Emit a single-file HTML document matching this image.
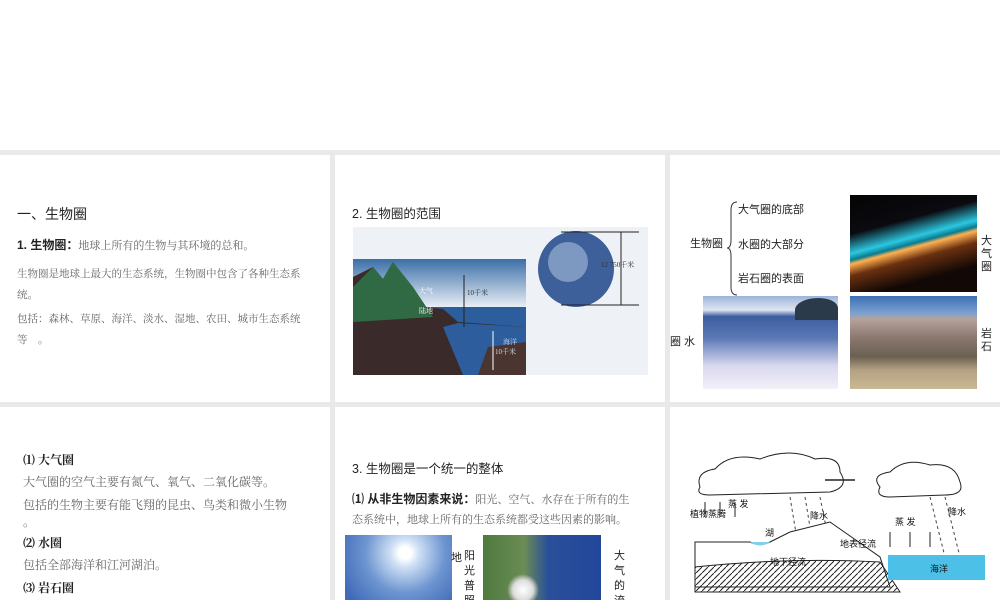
<!DOCTYPE html>
<html style="overflow:hidden;width:1000px;height:600px"><head><meta charset="utf-8"><style>
*{margin:0;padding:0;box-sizing:border-box}
body{width:1000px;height:600px;background:#e9e9e9;position:relative;overflow:hidden;font-family:"Liberation Serif","Noto Serif CJK SC",serif;color:#333}
.p{position:absolute;background:#fff;overflow:hidden}
.t{position:absolute;white-space:nowrap}
.s{font-family:"Liberation Sans","Noto Sans CJK SC",sans-serif}
.g{color:#666}
.v{position:absolute;width:14px;font-size:11px;line-height:13px;white-space:normal;font-family:"Liberation Sans","Noto Sans CJK SC",sans-serif;color:#222}
</style></head><body>
<div class="p" style="left:0;top:0;width:1000px;height:150px"></div>

<!-- panel 1 -->
<div class="p" style="left:0;top:155px;width:330px;height:247px">
<div class="t s" style="left:17px;top:49px;font-size:14px;color:#222">一、生物圈</div>
<div class="t" style="left:17px;top:81px;font-size:11px"><b class="s" style="font-size:12px;color:#222">1. 生物圈：</b><span class="g">地球上所有的生物与其环境的总和。</span></div>
<div class="t g" style="left:17px;top:109px;font-size:10.5px;line-height:21px">生物圈是地球上最大的生态系统，生物圈中包含了各种生态系<br>统。</div>
<div class="t g" style="left:17px;top:154px;font-size:10.5px;line-height:21px">包括：森林、草原、海洋、淡水、湿地、农田、城市生态系统<br>等　。</div>
</div>

<!-- panel 2 -->
<div class="p" style="left:335px;top:155px;width:330px;height:247px">
<div class="t s" style="left:17px;top:48px;font-size:12.5px;color:#222">2. 生物圈的范围</div>
<div style="position:absolute;left:18px;top:72px;width:295px;height:148px;background:#eef1f6"></div>
<div style="position:absolute;left:18px;top:104px;width:173px;height:48px;background:linear-gradient(#3b6fa8,#e8eef5)"></div>
<div style="position:absolute;left:18px;top:152px;width:173px;height:68px;background:#2c5d9c"></div>
<svg style="position:absolute;left:18px;top:72px" width="295" height="148">
<path d="M0 50 L0 148 L173 148 L173 100 L105 95 L90 82 L70 80 L40 35 L30 52 L20 40 Z" fill="#3a2a2a"/>
<path d="M0 60 L20 40 L30 52 L40 35 L60 60 L80 90 L0 95 Z" fill="#2f6a45"/>
<path d="M90 100 L105 96 L173 100 L173 148 L110 148 Z" fill="#2d5d9c"/>
<path d="M125 148 L135 120 L173 115 L173 148 Z" fill="#4a3530"/>
<circle cx="223" cy="42" r="38" fill="#3d5f9a"/>
<circle cx="215" cy="35" r="20" fill="#a9bfdc" opacity=".6"/>
<line x1="208" y1="5" x2="286" y2="5" stroke="#222"/><line x1="208" y1="78" x2="286" y2="78" stroke="#222"/>
<line x1="268" y1="5" x2="268" y2="78" stroke="#222"/>
<line x1="111" y1="48" x2="111" y2="100" stroke="#222"/>
<line x1="140" y1="104" x2="140" y2="143" stroke="#fff"/>
<text x="248" y="40" font-size="7" fill="#333">12 750千米</text>
<text x="114" y="68" font-size="7" fill="#333">10千米</text>
<text x="66" y="66" font-size="7" fill="#fff">大气</text>
<text x="66" y="86" font-size="7" fill="#fff">陆地</text>
<text x="150" y="117" font-size="7" fill="#cde">海洋</text>
<text x="142" y="127" font-size="7" fill="#cde">10千米</text>
</svg>
</div>

<!-- panel 3 -->
<div class="p" style="left:670px;top:155px;width:330px;height:247px">
<div class="t s" style="left:20px;top:80px;font-size:11px;color:#222">生物圈</div>
<svg style="position:absolute;left:55px;top:45px" width="15" height="97"><path d="M12 2 Q6 2 6 10 L6 40 Q6 48 2 48 Q6 48 6 56 L6 87 Q6 95 12 95" fill="none" stroke="#333"/></svg>
<div class="t s" style="left:68px;top:46px;font-size:11px;color:#222">大气圈的底部</div>
<div class="t s" style="left:68px;top:81px;font-size:11px;color:#222">水圈的大部分</div>
<div class="t s" style="left:68px;top:115px;font-size:11px;color:#222">岩石圈的表面</div>
<div style="position:absolute;left:180px;top:40px;width:127px;height:97px;background:linear-gradient(165deg,#050505 0%,#0a0a10 30%,#2cc7e0 45%,#0a7a90 50%,#ffb050 53%,#6a3010 62%,#120806 80%)"></div>
<div style="position:absolute;left:33px;top:141px;width:135px;height:93px;background:linear-gradient(#9bb4da 0%,#dfe6f2 15%,#3d5d9e 22%,#5a78b5 45%,#d8d8ef 75%,#f4f0f8 100%)"></div>
<div style="position:absolute;left:125px;top:143px;width:43px;height:22px;background:#2a3a4a;border-radius:60% 50% 0 0"></div>
<div style="position:absolute;left:180px;top:141px;width:127px;height:93px;background:linear-gradient(#3e6fb3 0%,#7aa0d0 18%,#b5a39a 25%,#8b7770 45%,#6a6152 65%,#b4a283 80%,#c9b894 100%)"></div>
<div class="v" style="left:311px;top:80px">大气圈</div>
<div class="t s" style="left:0;top:178px;font-size:11px;color:#222">圈 水</div>
<div class="v" style="left:311px;top:173px">岩石</div>
</div>

<!-- row 2 -->
<div class="p" style="left:0;top:407px;width:330px;height:193px">
<div class="t" style="left:23px;top:44px;font-size:12px;font-weight:bold;color:#222">⑴ 大气圈</div>
<div class="t g" style="left:23px;top:66px;font-size:12px">大气圈的空气主要有氮气、氧气、二氧化碳等。</div>
<div class="t g" style="left:23px;top:89px;font-size:12px">包括的生物主要有能飞翔的昆虫、鸟类和微小生物</div>
<div class="t g" style="left:23px;top:106px;font-size:12px">。</div>
<div class="t" style="left:23px;top:127px;font-size:12px;font-weight:bold;color:#222">⑵ 水圈</div>
<div class="t g" style="left:23px;top:149px;font-size:12px">包括全部海洋和江河湖泊。</div>
<div class="t" style="left:23px;top:172px;font-size:12px;font-weight:bold;color:#222">⑶ 岩石圈</div>
</div>

<div class="p" style="left:335px;top:407px;width:330px;height:193px">
<div class="t s" style="left:17px;top:51px;font-size:12.5px;color:#222">3. 生物圈是一个统一的整体</div>
<div class="t" style="left:17px;top:83px;font-size:11px"><b class="s" style="font-size:12px;color:#222">⑴ 从非生物因素来说：</b><span class="g">阳光、空气、水存在于所有的生</span></div>
<div class="t g" style="left:17px;top:104px;font-size:11px">态系统中，地球上所有的生态系统都受这些因素的影响。</div>
<div style="position:absolute;left:10px;top:128px;width:107px;height:65px;background:radial-gradient(circle at 60px 18px,#fff 0,#fff 6px,#cfe0f5 14px,#6d95d0 40px,#3f6ab8 70px)"></div>
<div class="t s" style="left:116px;top:142px;font-size:11px;color:#222">地</div>
<div class="v" style="left:129px;top:142px;font-size:11px;line-height:15px">阳光普照大</div>
<div style="position:absolute;left:148px;top:128px;width:118px;height:65px;background:radial-gradient(circle at 40px 55px,#fff 0,#ddd 10px,transparent 16px),linear-gradient(90deg,#4e7a3e 0%,#6b8c55 35%,#2a4f9a 55%,#22469a 100%)"></div>
<div class="v" style="left:279px;top:142px;font-size:11px;line-height:15px">大气的流</div>
</div>

<div class="p" style="left:670px;top:407px;width:330px;height:193px">
<svg style="position:absolute;left:20px;top:40px" width="300" height="153" font-family="Liberation Sans,Noto Sans CJK SC,sans-serif" font-size="9" fill="#111">
<defs><pattern id="h" width="6" height="6" patternUnits="userSpaceOnUse"><line x1="0" y1="6" x2="6" y2="0" stroke="#222"/></pattern></defs>
<path d="M10 40 Q5 25 25 22 Q40 5 70 12 Q100 0 125 12 Q150 8 150 25 Q160 40 140 45 L20 48 Q5 48 10 40Z" fill="#fff" stroke="#222"/>
<path d="M190 40 Q180 28 200 25 Q215 10 240 18 Q265 15 270 35 Q275 48 255 48 L200 50 Q185 50 190 40Z" fill="#fff" stroke="#222"/>
<line x1="135" y1="33" x2="165" y2="33" stroke="#222" stroke-width="1.5"/>
<g stroke="#444" stroke-dasharray="3 3"><line x1="100" y1="50" x2="110" y2="110"/><line x1="115" y1="50" x2="125" y2="110"/><line x1="130" y1="50" x2="140" y2="100"/><line x1="240" y1="50" x2="255" y2="110"/><line x1="255" y1="50" x2="270" y2="110"/></g>
<g stroke="#222"><line x1="15" y1="70" x2="15" y2="55"/><line x1="30" y1="70" x2="30" y2="55"/><line x1="45" y1="70" x2="45" y2="55"/><line x1="200" y1="100" x2="200" y2="85"/><line x1="220" y1="100" x2="220" y2="85"/><line x1="240" y1="100" x2="240" y2="85"/></g>
<path d="M5 95 L60 95 Q70 100 80 95 L100 85 L140 75 L190 110 L200 140 L5 140Z" fill="#fff" stroke="#222"/>
<path d="M5 120 Q100 110 190 115 L210 145 L5 145Z" fill="url(#h)" stroke="#222"/>
<path d="M60 95 Q70 102 80 95Z" fill="#7fd0e8"/>
<rect x="198" y="108" width="97" height="25" fill="#4cc0e6"/>
<text x="240" y="125">海洋</text><text x="75" y="89">湖</text><text x="120" y="72">降水</text><text x="258" y="68">降水</text>
<text x="38" y="60">蒸 发</text><text x="205" y="78">蒸 发</text><text x="0" y="70">植物蒸腾</text><text x="150" y="100">地表径流</text><text x="80" y="118">地下径流</text>
</svg>
</div>
</body></html>
